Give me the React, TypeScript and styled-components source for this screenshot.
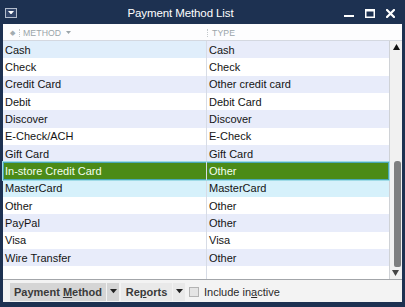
import React from 'react';
import styled, { createGlobalStyle } from 'styled-components';

const Global = createGlobalStyle`
  html, body { margin: 0; padding: 0; background: #1c2f4e; }
  body { font-family: "Liberation Sans", Arial, sans-serif; }
  * { box-sizing: border-box; }
`;

const Window = styled.div`
  width: 405px;
  height: 307px;
  background: #1d3151;
  padding: 0 3px 5px 3px;
  display: flex;
  flex-direction: column;
`;

const TitleBar = styled.div`
  height: 24px;
  display: flex;
  align-items: center;
  padding: 0 7px 0 2px;
  color: #ffffff;
`;

const SysIcon = styled.div`
  width: 12px;
  height: 10px;
  border: 1px solid #b4bdcc;
  background: #33466a;
  display: flex;
  align-items: center;
  justify-content: center;
  margin-top: 1px;
`;

const Title = styled.div`
  flex: 1;
  text-align: center;
  font-size: 11.5px;
  letter-spacing: -0.1px;
  padding-top: 1px;
`;

const Controls = styled.div`
  display: flex;
  align-items: center;
  gap: 11px;
  margin-top: 2px;
`;

const Content = styled.div`
  flex: 1;
  background: #ffffff;
  display: flex;
  flex-direction: column;
  min-height: 0;
`;

const Header = styled.div`
  height: 17px;
  display: flex;
  align-items: center;
  border-bottom: 1px solid #d4d8e0;
  background: #fdfdfe;
  color: #9ba5a9;
  font-size: 8.7px;
`;

const HeadCell = styled.div<{ $w?: number }>`
  display: flex;
  align-items: center;
  height: 100%;
  ${(p) => (p.$w ? `width: ${p.$w}px;` : 'flex: 1;')}
`;

const Diamond = styled.span`
  font-size: 7px;
  color: #a3acb0;
  margin: 1px 0 0 7px;
`;

const HeadSep = styled.span<{ $ml: number }>`
  width: 1px;
  height: 8px;
  margin: 1px 3px 0 ${(p) => p.$ml}px;
  border-left: 1px dotted #c4c9cc;
`;

const HeadText = styled.span`
  padding-top: 1px;
  letter-spacing: 0.1px;
`;

const Body = styled.div`
  height: 238px;
  display: flex;
`;

const Grid = styled.div`
  flex: 1;
  display: flex;
  flex-direction: column;
`;

type Variant = 'plain' | 'tint' | 'hover' | 'selected';

const rowBg: Record<Variant, string> = {
  plain: '#ffffff',
  tint: '#e8ecfa',
  hover: '#d6f1fb',
  selected: '#4b8b17',
};

const Row = styled.div<{ $v: Variant }>`
  height: 17.333px;
  display: flex;
  background: ${(p) => rowBg[p.$v]};
  color: ${(p) => (p.$v === 'selected' ? '#f4fff0' : '#141414')};
  font-size: 11px;
  ${(p) =>
    p.$v === 'selected'
      ? 'box-shadow: inset 0 0 0 1px #4aa7b6, 0 0 0 1px #9fdbe6; position: relative;'
      : ''}
`;

const Cell = styled.div<{ $first?: boolean; $bg?: string }>`
  display: flex;
  align-items: center;
  padding-left: 2px;
  white-space: nowrap;
  overflow: hidden;
  ${(p) => (p.$bg ? `background: ${p.$bg};` : '')}
  ${(p) =>
    p.$first
      ? 'width: 204px; border-right: 1px solid #d7dce6;'
      : 'flex: 1;'}
`;

const Filler = styled.div`
  flex: 1;
  display: flex;
`;

const Scrollbar = styled.div`
  width: 13px;
  background: #f1f1f1;
  border-left: 1px solid #cfd2d6;
  display: flex;
  flex-direction: column;
  align-items: center;
`;

const ArrowBox = styled.div`
  height: 12px;
  display: flex;
  align-items: center;
  justify-content: center;
  padding-left: 1px;
`;

const Track = styled.div`
  flex: 1;
  width: 100%;
  display: flex;
  flex-direction: column;
  justify-content: flex-end;
  align-items: center;
  padding-left: 2px;
`;

const Thumb = styled.div`
  width: 7px;
  background: #7e7f80;
  border-radius: 3px 3px 2px 2px;
`;

const Toolbar = styled.div`
  height: 23px;
  border-top: 1px solid #a3a6aa;
  background: #f3f3f3;
  display: flex;
  align-items: center;
  padding: 1px 0 0 7px;
  gap: 2px;
  font-size: 11px;
  color: #333;
`;

const SplitButton = styled.div<{ $bg: string }>`
  display: flex;
  height: 18px;
  background: ${(p) => p.$bg};
`;

const BtnMain = styled.div<{ $w: number }>`
  width: ${(p) => p.$w}px;
  display: flex;
  align-items: center;
  justify-content: center;
  font-weight: bold;
  color: #3a3a3a;
`;

const BtnArrow = styled.div`
  width: 13px;
  display: flex;
  align-items: center;
  justify-content: center;
  border-left: 1px solid #f2f2f2;
`;

const Check = styled.span`
  width: 10px;
  height: 10px;
  border: 1px solid #b3b3b3;
  background: #e4e4e4;
  margin-left: 1px;
`;

const CheckLabel = styled.label`
  display: flex;
  align-items: center;
  gap: 5px;
  margin-left: 1px;
  color: #2a2a2a;
`;

const U = styled.span`
  text-decoration: underline;
`;

const Caret = ({ size = 7, color = '#222' }: { size?: number; color?: string }) => (
  <svg width={size} height={size * 0.6} viewBox="0 0 10 6">
    <polygon points="0,0 10,0 5,6" fill={color} />
  </svg>
);

const UpTri = ({ color = '#111' }: { color?: string }) => (
  <svg width="7" height="6" viewBox="0 0 7 6">
    <polygon points="0,6 7,6 3.5,0" fill={color} />
  </svg>
);

const rows: [string, string][] = [
  ['Cash', 'Cash'],
  ['Check', 'Check'],
  ['Credit Card', 'Other credit card'],
  ['Debit', 'Debit Card'],
  ['Discover', 'Discover'],
  ['E-Check/ACH', 'E-Check'],
  ['Gift Card', 'Gift Card'],
  ['In-store Credit Card', 'Other'],
  ['MasterCard', 'MasterCard'],
  ['Other', 'Other'],
  ['PayPal', 'Other'],
  ['Visa', 'Visa'],
  ['Wire Transfer', 'Other'],
];

const SELECTED = 7;
const HOVER = 8;

export default function App() {
  return (
    <>
      <Global />
      <Window>
        <TitleBar>
          <SysIcon>
            <Caret size={6} color="#ffffff" />
          </SysIcon>
          <Title>Payment Method List</Title>
          <Controls>
            <svg width="10" height="10" viewBox="0 0 10 10">
              <rect x="0" y="7" width="10" height="2" fill="#fff" />
            </svg>
            <svg width="10" height="9" viewBox="0 0 10 9">
              <rect x="0.75" y="0.75" width="8.5" height="7.5" fill="none" stroke="#fff" strokeWidth="1.5" />
              <rect x="0" y="0" width="10" height="2.5" fill="#fff" />
            </svg>
            <svg width="9" height="9" viewBox="0 0 9 9">
              <path d="M1 1 L8 8 M8 1 L1 8" stroke="#fff" strokeWidth="2.2" strokeLinecap="square" />
            </svg>
          </Controls>
        </TitleBar>
        <Content>
          <Header>
            <HeadCell $w={204}>
              <Diamond>◆</Diamond>
              <HeadSep $ml={4} />
              <HeadText>METHOD</HeadText>
              <span style={{ marginLeft: 5, marginTop: 1, display: 'flex' }}>
                <Caret size={5} color="#9ba5a9" />
              </span>
            </HeadCell>
            <HeadCell>
              <HeadSep $ml={0} />
              <HeadText style={{ marginLeft: 1 }}>TYPE</HeadText>
            </HeadCell>
          </Header>
          <Body>
            <Grid>
              {rows.map(([m, t], i) => {
                const v: Variant =
                  i === SELECTED ? 'selected' : i === HOVER ? 'hover' : i % 2 === 0 ? 'tint' : 'plain';
                return (
                  <Row key={m} $v={v}>
                    <Cell $first $bg={i === 0 ? '#e0eefb' : undefined}>
                      {m}
                    </Cell>
                    <Cell>{t}</Cell>
                  </Row>
                );
              })}
              <Filler>
                <Cell $first />
                <Cell />
              </Filler>
            </Grid>
            <Scrollbar>
              <ArrowBox>
                <UpTri />
              </ArrowBox>
              <Track>
                <Thumb style={{ height: 106 }} />
              </Track>
              <ArrowBox style={{ transform: 'rotate(180deg)' }}>
                <UpTri color="#444" />
              </ArrowBox>
            </Scrollbar>
          </Body>
          <Toolbar>
            <SplitButton $bg="#d5d5d5">
              <BtnMain $w={96}>
                <span>
                  Payment <U>M</U>ethod
                </span>
              </BtnMain>
              <BtnArrow>
                <Caret size={7} />
              </BtnArrow>
            </SplitButton>
            <SplitButton $bg="#e9e9e9">
              <BtnMain $w={51}>
                <span>
                  Re<U>p</U>orts
                </span>
              </BtnMain>
              <BtnArrow>
                <Caret size={7} />
              </BtnArrow>
            </SplitButton>
            <CheckLabel>
              <Check />
              <span>
                Include in<U>a</U>ctive
              </span>
            </CheckLabel>
          </Toolbar>
        </Content>
      </Window>
    </>
  );
}
